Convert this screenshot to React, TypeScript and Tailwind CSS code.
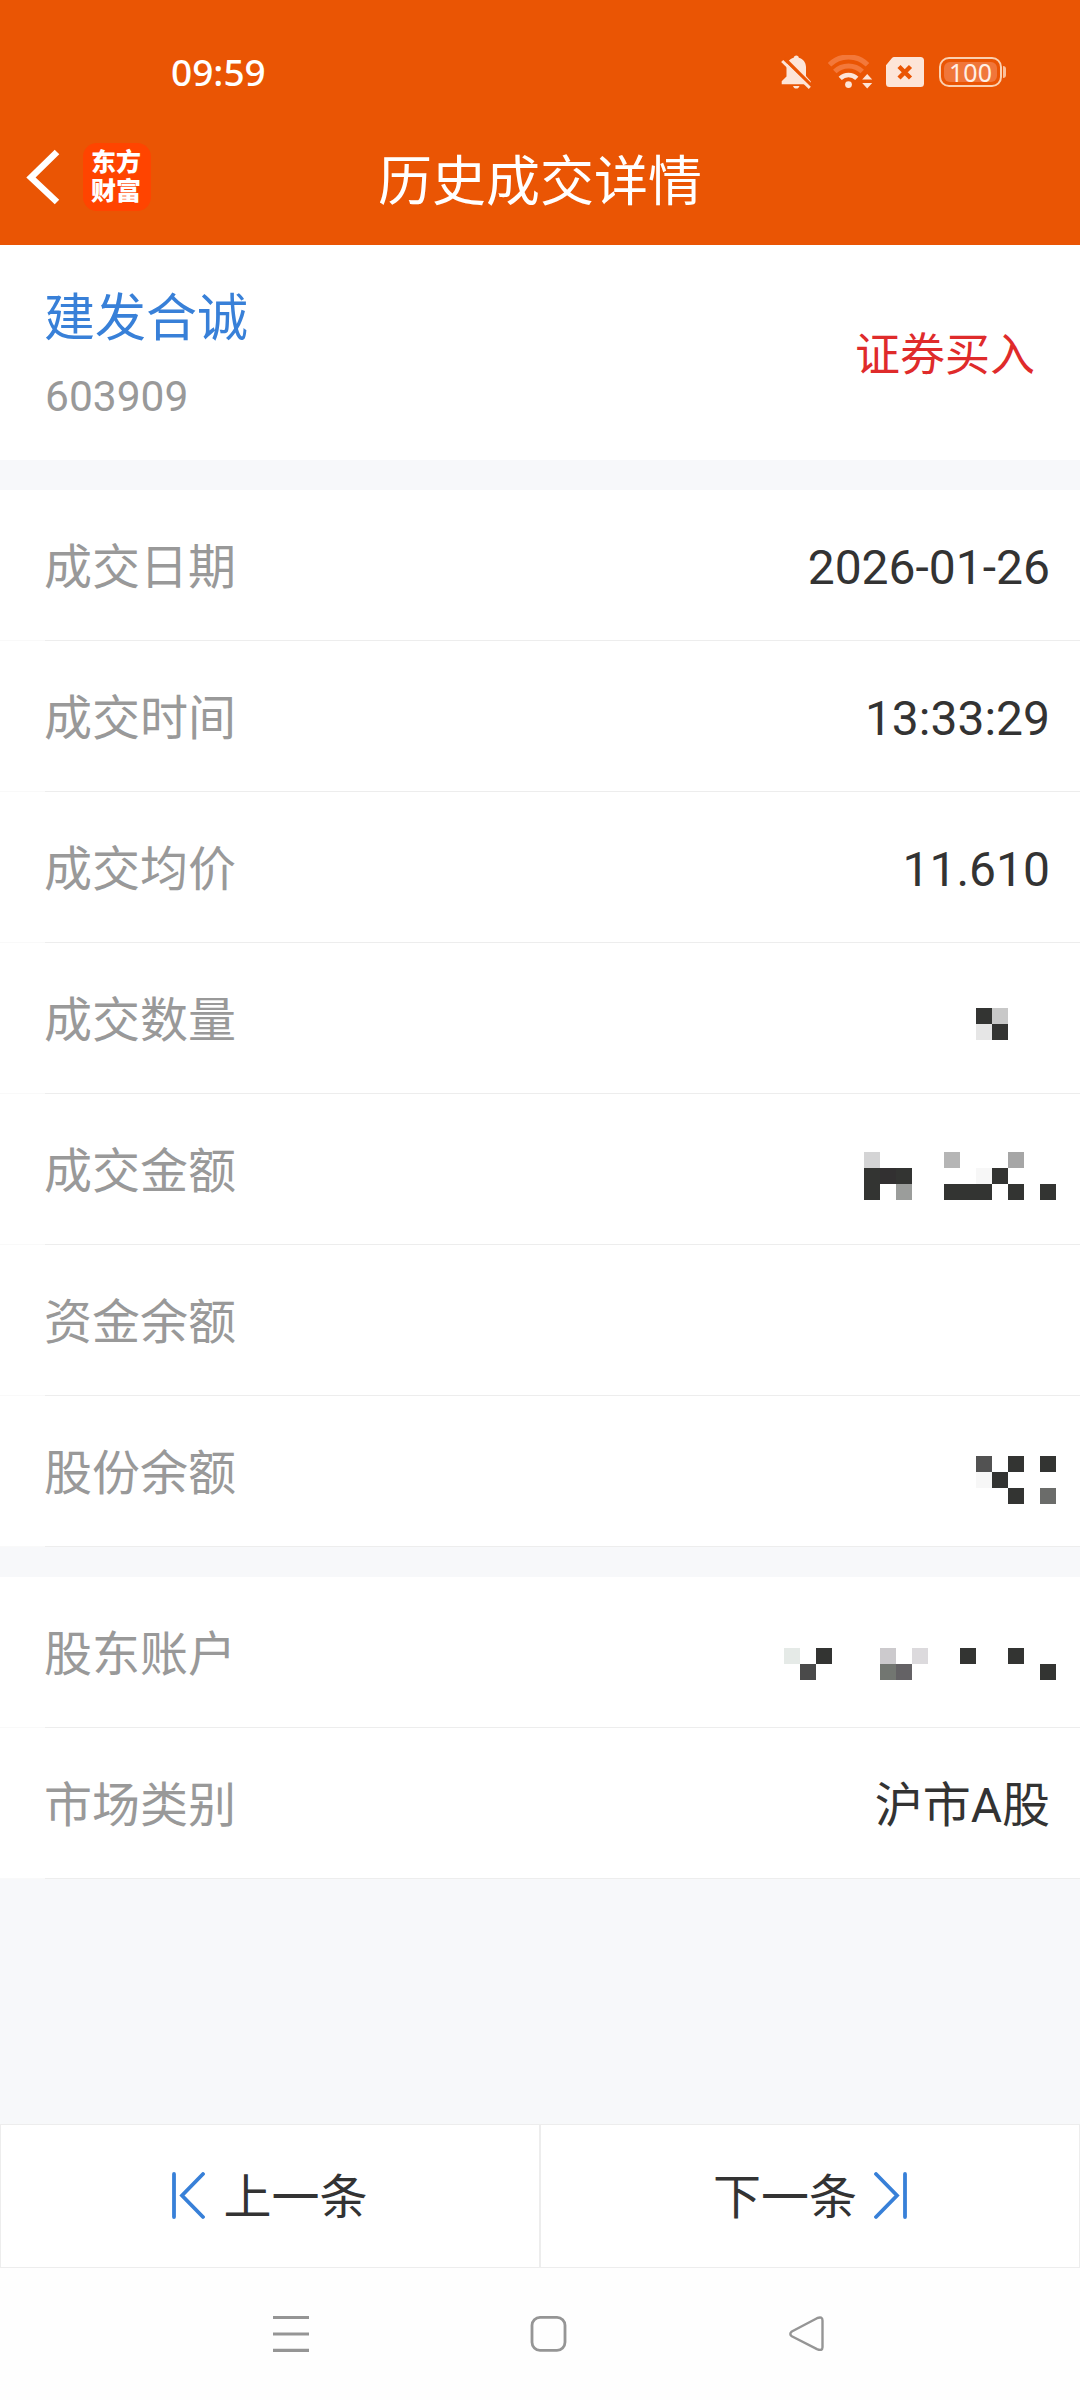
import { ComponentPropsWithoutRef, ReactNode } from "react";
import clsx from "clsx";

const D = "#333432";

interface IMosaic {
  cols: number;
  rows: number;
  cells: [number, number, string][];
  className?: string;
}

interface IRow {
  label: string;
  value?: string;
  mosaic?: IMosaic;
}

const tradeRows: IRow[] = [
  { label: "成交日期", value: "2026-01-26" },
  { label: "成交时间", value: "13:33:29" },
  { label: "成交均价", value: "11.610" },
  {
    label: "成交数量",
    mosaic: {
      cols: 5,
      rows: 2,
      className: "mt-[65px]",
      cells: [
        [0, 0, D],
        [1, 0, "#c8c8c8"],
        [0, 1, "#e6e6e6"],
        [1, 1, D],
      ],
    },
  },
  {
    label: "成交金额",
    mosaic: {
      cols: 12,
      rows: 3,
      className: "mt-[58px]",
      cells: [
        [0, 0, "#d4d4d5"],
        [5, 0, "#b5b5b5"],
        [9, 0, "#a6a6a6"],
        [0, 1, D],
        [1, 1, "#323031"],
        [2, 1, D],
        [7, 1, "#f7f7f7"],
        [8, 1, D],
        [0, 2, D],
        [2, 2, "#9b9d9b"],
        [5, 2, D],
        [6, 2, D],
        [7, 2, D],
        [9, 2, D],
        [11, 2, D],
      ],
    },
  },
  { label: "资金余额" },
  {
    label: "股份余额",
    mosaic: {
      cols: 5,
      rows: 3,
      className: "mt-[60px]",
      cells: [
        [0, 0, "#525252"],
        [2, 0, D],
        [4, 0, D],
        [0, 1, "#f7f7f7"],
        [1, 1, D],
        [2, 2, D],
        [4, 2, "#6b6c6a"],
      ],
    },
  },
];

const accountRows: IRow[] = [
  {
    label: "股东账户",
    mosaic: {
      cols: 17,
      rows: 2,
      className: "mt-[71px]",
      cells: [
        [0, 0, "#e5eae7"],
        [2, 0, D],
        [6, 0, "#cccacd"],
        [8, 0, "#dcdadd"],
        [11, 0, D],
        [14, 0, D],
        [1, 1, "#4a4a4a"],
        [6, 1, "#727671"],
        [7, 1, "#646265"],
        [16, 1, D],
      ],
    },
  },
  { label: "市场类别", value: "沪市A股" },
];

function Mosaic({ cols, rows, cells, className }: IMosaic) {
  return (
    <svg
      width={cols * 16}
      height={rows * 16}
      shapeRendering="crispEdges"
      className={clsx("-mr-1.5 shrink-0 self-start", className)}
    >
      {cells.map(([x, y, fill]) => (
        <rect key={`${x}-${y}`} x={x * 16} y={y * 16} width={16} height={16} fill={fill} />
      ))}
    </svg>
  );
}

function DetailRow({ label, value, mosaic }: IRow) {
  return (
    <div>
      <div className="flex h-[150px] items-center justify-between pr-[30px] pl-[44px]">
        <span className="pt-[6px] text-[48px] text-[#999999]">{label}</span>
        {value && <span className="pt-[5px] text-[48px] text-[#333333]">{value}</span>}
        {mosaic && <Mosaic {...mosaic} />}
      </div>
      <div className="flex h-px bg-[#ededed]">
        <div className="w-[45px] bg-[#f9f9f9]" />
      </div>
    </div>
  );
}

function StatusBar() {
  return (
    <div className="flex h-[113px] items-center justify-between pt-[31px] pr-[74px] pl-[171px]">
      <span className="font-['Noto_Sans'] text-[37px] font-medium text-white">09:59</span>
      <div className="flex items-center text-[#fde5d8]">
        {/* muted bell */}
        <svg width="31" height="34" viewBox="0 0 31 34" fill="currentColor">
          <path d="M15.3 0.5c1.5 0 2.4 1 2.5 2.2 4.300 1.100 7.200 4.800 7.200 9.300v9l4.700 5.200v3H.7v-3l4.800-4.700V12c0-4.500 3-8.200 7.200-9.300.2-1.200 1.100-2.200 2.600-2.200z" />
          <path d="M12 31h6.500c-.5 1.600-1.700 2.600-3.200 2.600S12.500 32.600 12 31z" />
          <path d="M3.800 4 31 31.200" stroke="#ea5504" strokeWidth="3.600" />
          <path d="M1.200 6 28.800 32.800" stroke="currentColor" strokeWidth="3" />
        </svg>
        {/* wifi, lowest band only, with traffic arrows */}
        <svg width="45" height="34" viewBox="0 0 45 34" fill="none" className="ml-4">
          <path d="M1.500 10.500a27 27 0 0 1 38 0" stroke="#f3783a" strokeWidth="5" transform="translate(0 -.8)" />
          <path d="M6.800 17a19.500 19.500 0 0 1 27.400 0" stroke="#f3783a" strokeWidth="5" transform="translate(0 -.5)" />
          <path d="M12.200 23.400a12 12 0 0 1 16.600 0" stroke="currentColor" strokeWidth="4.600" />
          <circle cx="20.500" cy="29.600" r="3.400" fill="currentColor" />
          <path d="m39.200 19 5 5.400H34.200z M39.200 33.500l5-5.500H34.200z" fill="currentColor" />
        </svg>
        <svg width="38" height="30" viewBox="0 0 38 30" className="ml-[13px]">
          <path
            d="M8 0h26.500A3.500 3.500 0 0 1 38 3.500v23a3.500 3.500 0 0 1-3.500 3.500h-31A3.500 3.500 0 0 1 0 26.500V8.200L6 1Q7 0 8 0z"
            fill="currentColor"
          />
          <path d="m13 9.500 11.500 11.500M24.500 9.500 13 21" stroke="#ea5504" strokeWidth="4.400" />
        </svg>
        <div className="ml-[15px] flex h-[30px] w-[63px] items-center justify-center rounded-[10px] border-2 border-[#fbd0b0] p-[3px]">
          <div className="flex size-full items-center justify-center rounded-md bg-[#f0763a] font-['Noto_Sans'] text-[25px] leading-none text-[#fff0e6]">
            100
          </div>
        </div>
        <div className="ml-px h-3 w-[3px] rounded-r-sm bg-[#fbc09a]" />
      </div>
    </div>
  );
}

function TitleBar() {
  return (
    <div className="grid h-[132px] grid-cols-[1fr_auto_1fr] items-center">
      <div className="flex items-center pb-[4px] pl-[26px]">
        <svg width="34" height="56" viewBox="0 0 34 56" fill="none" stroke="white" strokeWidth="6.500">
          <path d="M31 3 5 28.500 31 53" />
        </svg>
        <div className="ml-[23px] flex size-[68px] flex-col items-center justify-center rounded-[14px] bg-[#ff4400] pr-0.5 text-[25px] leading-[29px] font-black text-white">
          <span>东方</span>
          <span>财富</span>
        </div>
      </div>
      <h1 className="pt-[7px] text-[54px] leading-none text-white">历史成交详情</h1>
    </div>
  );
}

function PagerButton({ children, ...props }: ComponentPropsWithoutRef<"button"> & { children: ReactNode }) {
  return (
    <button
      {...props}
      className="flex flex-1 items-center justify-center border border-[#ededed] bg-white text-[48px] text-[#333333]"
    >
      {children}
    </button>
  );
}

export default function App() {
  return (
    <div className="flex h-[2400px] w-[1080px] flex-col bg-[#f7f8fa] font-[Roboto,'Noto_Sans_CJK_SC',sans-serif]">
      <header className="h-[245px] bg-[#ea5504]">
        <StatusBar />
        <TitleBar />
      </header>

      <section className="flex h-[215px] items-center justify-between bg-white px-[45px]">
        <div className="flex flex-col pt-[10px]">
          <span className="-ml-px text-[51px] leading-[74px] text-[#3880d8]">建发合诚</span>
          <span className="mt-[4px] text-[42.500px] leading-[74px] text-[#999999]">603909</span>
        </div>
        <span className="pt-[7px] text-[45px] text-[#df2b2b]">证券买入</span>
      </section>

      <section className="mt-[30px] bg-white">
        {tradeRows.map((row) => (
          <DetailRow key={row.label} {...row} />
        ))}
      </section>

      <section className="mt-[30px] bg-white">
        {accountRows.map((row) => (
          <DetailRow key={row.label} {...row} />
        ))}
      </section>

      <div className="mt-auto flex h-[144px]">
        <PagerButton>
          <svg width="33" height="48" viewBox="0 0 33 48" fill="none" stroke="#3880d8" strokeWidth="3.800" strokeLinecap="round">
            <path d="M2 2v43M31 2 10 23.500 31 45" />
          </svg>
          <span className="ml-[18px] pt-[4px]">上一条</span>
        </PagerButton>
        <PagerButton>
          <span className="mr-[17px] pt-[4px]">下一条</span>
          <svg width="33" height="48" viewBox="0 0 33 48" fill="none" stroke="#3880d8" strokeWidth="3.800" strokeLinecap="round">
            <path d="M31 2v43M2 2l21 21.500L2 45" />
          </svg>
        </PagerButton>
      </div>

      <nav className="flex h-[132px] items-start justify-between bg-[#fefefe] pt-[46px] pr-[254px] pl-[272px]">
        <svg width="38" height="38" fill="none" stroke="#959595" strokeWidth="3.200">
          <path d="M1 3.500h36M1 20h36M1 36.300h36" />
        </svg>
        <svg width="38" height="38" fill="none" stroke="#959595" strokeWidth="2.800">
          <rect x="2" y="3.300" width="33" height="33" rx="8" />
        </svg>
        <svg width="38" height="38" fill="none" stroke="#959595" strokeWidth="2.400" strokeLinejoin="round">
          <path d="M3.800 17.500 29 4.200Q34.500 2 34.500 6.500v26.800q0 4-5.500 1.800L3.800 22.200q-3-2.200 0-4.700z" />
        </svg>
      </nav>
    </div>
  );
}
